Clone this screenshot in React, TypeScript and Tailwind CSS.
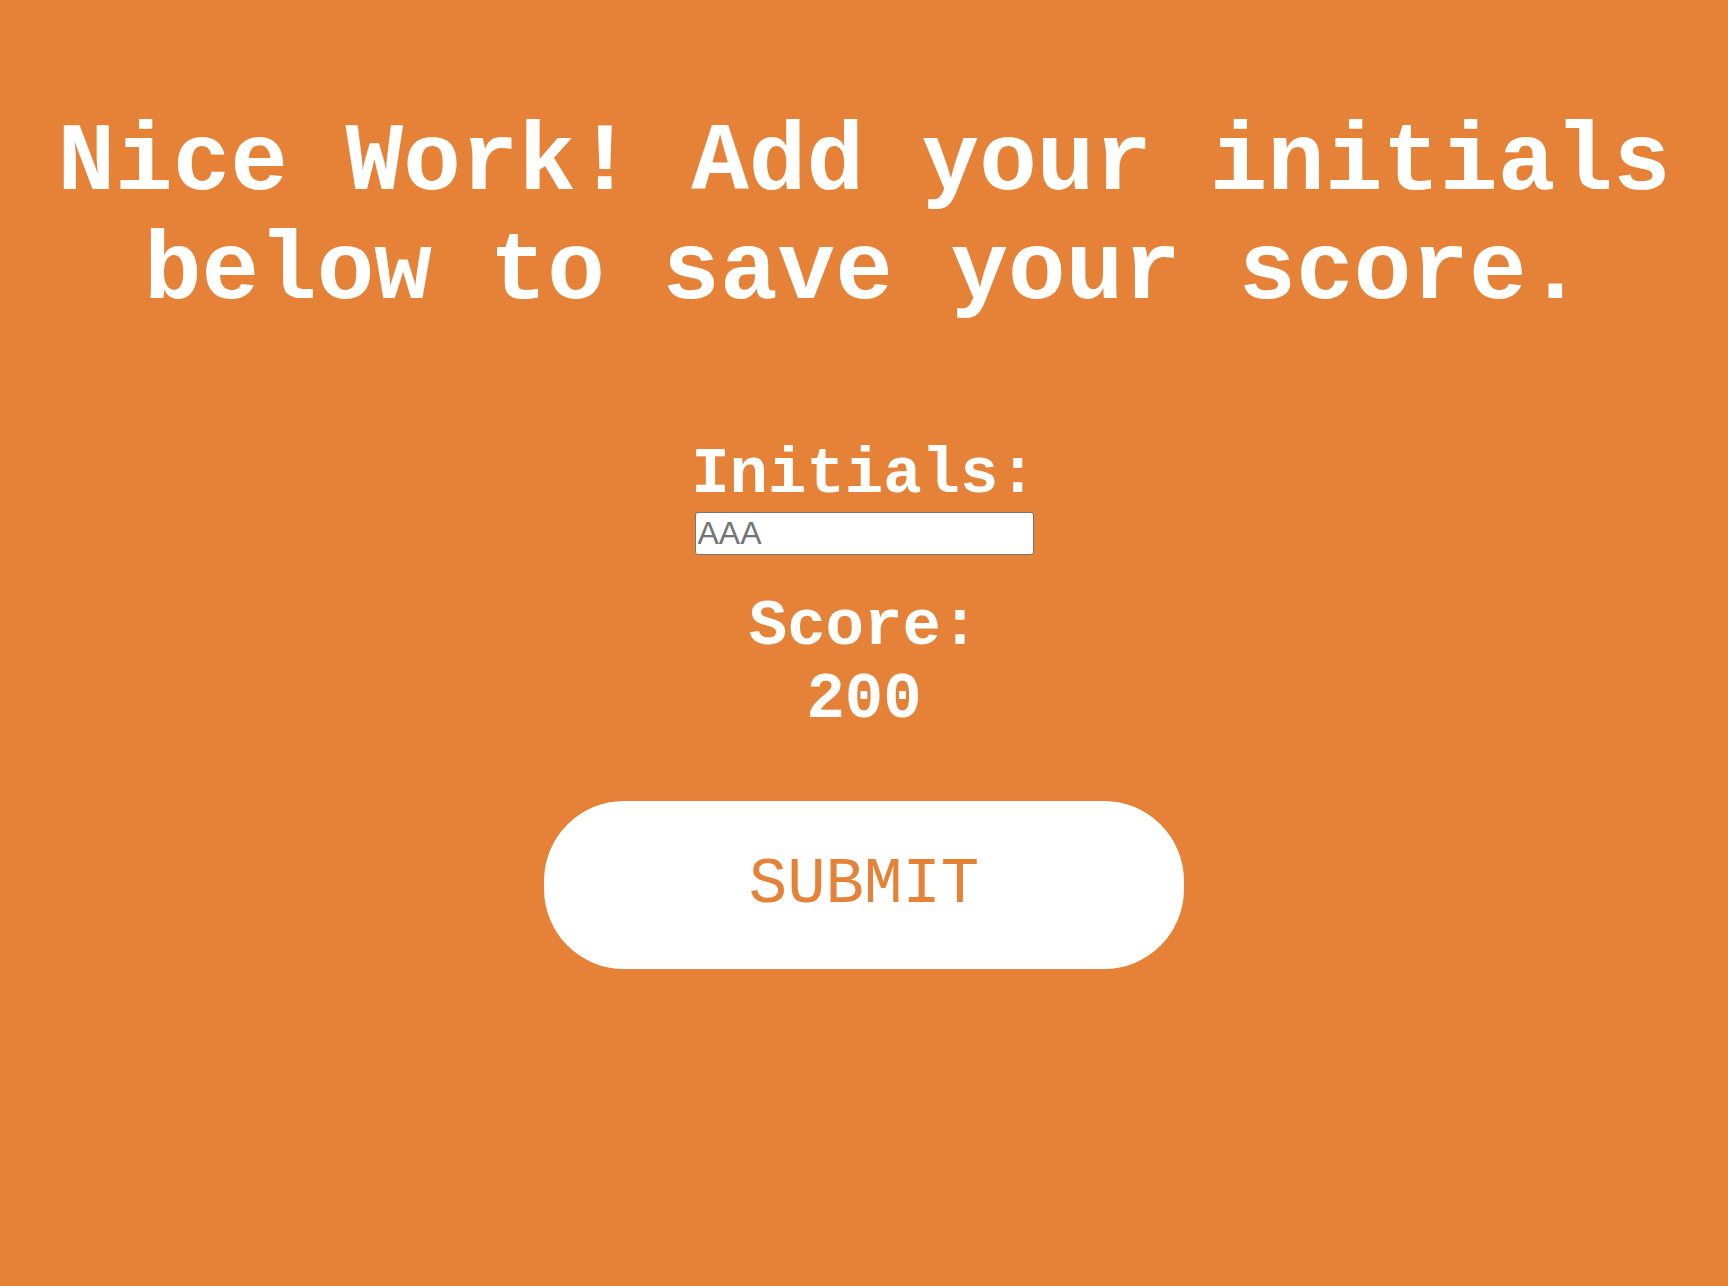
import { useState } from "react";

const mono = "font-['Liberation_Mono','Courier_New',monospace]";

export default function App() {
  const [initials, setInitials] = useState("");
  const score = 200;

  return (
    <main className={`flex min-h-[1286px] flex-col items-center bg-[#e58237] text-white ${mono}`}>
      <h1 className="mt-[110px] text-center text-[96px] font-bold leading-[1.133]">
        Nice Work! Add your initials below to save your score.
      </h1>

      <form
        className="flex flex-col items-center"
        onSubmit={(e) => e.preventDefault()}
      >
        <label htmlFor="initials" className="mt-[111px] text-[64px] font-bold leading-[1.133]">
          Initials:
        </label>
        <input
          id="initials"
          value={initials}
          onChange={(e) => setInitials(e.target.value)}
          placeholder="AAA"
          className="mt-[1px] h-[43px] w-[339px] rounded-[3px] border border-[#767676] bg-white px-[2px] font-['Liberation_Sans',Arial,sans-serif] text-[32px] leading-none text-black outline-none placeholder:text-[#757575]"
        />

        <p className="mt-[36px] text-[64px] font-bold leading-[1.133]">Score:</p>
        <p className="text-[64px] font-bold leading-[1.133]">{score}</p>

        <button
          type="submit"
          className="mt-[65px] h-[168px] w-[640px] rounded-[80px] bg-white text-[64px] leading-none text-[#e58237]"
        >
          SUBMIT
        </button>
      </form>
    </main>
  );
}
